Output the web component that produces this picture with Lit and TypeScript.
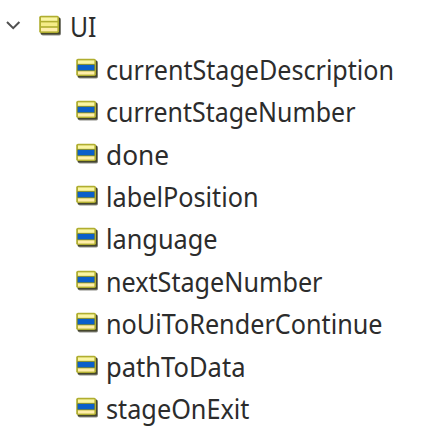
import { LitElement, html, css, svg } from "lit";
import { customElement, property } from "lit/decorators.js";

@customElement("node-icon")
class NodeIcon extends LitElement {
  @property({ type: Boolean }) field = false;
  static styles = css`
    :host { display: block; width: 24px; height: 22px; flex: none; }
    svg { display: block; }
  `;
  render() {
    return html`<svg width="24" height="22" viewBox="0 0 24 22">
      <rect x="2.2" y="3" width="19.8" height="17.4" rx="1.6" fill="#8d8d88" />
      <rect x="1.6" y="2.4" width="19.6" height="17.2" rx="1" fill="#45462c" />
      <rect x="0.2" y="0.8" width="19.8" height="17.2" rx="1.8" fill="#b0ae30" />
      <rect x="2" y="2.4" width="16.4" height="3.4" fill="#faf6a4" />
      ${this.field
        ? svg`<rect x="1.2" y="6.4" width="17.6" height="6.4" fill="#667c42" />
            <rect x="1.8" y="7" width="16.4" height="5.2" fill="#0b5fca" />
            <rect x="2" y="13.4" width="16.4" height="3.2" fill="#ffeeaa" />`
        : svg`<rect x="2" y="7.4" width="16.4" height="3.8" fill="#f5ec88" />
            <rect x="2" y="12.8" width="16.4" height="3.6" fill="#ffeeaa" />`}
    </svg>`;
  }
}

@customElement("node-label")
class NodeLabel extends LitElement {
  @property() text = "";
  @property({ type: Number }) span = 0;
  static styles = css`
    :host { display: block; flex: none; }
    svg { display: block; overflow: visible; }
    text { font: 27px "Noto Sans", "Open Sans", sans-serif; fill: #2c2c2c; }
  `;
  render() {
    return html`<svg width=${this.span} height="40">
      <text x="0" y="31" textLength=${this.span} lengthAdjust="spacingAndGlyphs">${this.text}</text>
    </svg>`;
  }
}

const fields: [string, number][] = [
  ["currentStageDescription", 288],
  ["currentStageNumber", 249.5],
  ["done", 63],
  ["labelPosition", 152.5],
  ["language", 111.5],
  ["nextStageNumber", 216.5],
  ["noUiToRenderContinue", 276.5],
  ["pathToData", 139.5],
  ["stageOnExit", 143.5],
];

@customElement("app-root")
class AppRoot extends LitElement {
  static styles = css`
    :host { display: block; height: 438px; overflow: hidden; background: #fff; }
    .tree { padding-top: 5px; }
    .row { display: flex; align-items: center; height: 42.45px; }
    .root { padding-left: 5px; }
    .chevron { width: 16px; height: 12px; margin-right: 18px; flex: none; }
    .root node-label { margin-left: 7px; }
    .child { padding-left: 76px; }
    .child node-label { margin-left: 6.4px; }
  `;
  render() {
    return html`<div class="tree">
      <div class="row root">
        <svg class="chevron" viewBox="0 0 16 12">
          <path d="M2 2 L8.2 8.2 L14.4 2" fill="none" stroke="#505050" stroke-width="2" />
        </svg>
        <node-icon></node-icon>
        <node-label text="UI" .span=${26.5}></node-label>
      </div>
      ${fields.map(
        ([name, span]) => html`<div class="row child">
          <node-icon field></node-icon>
          <node-label .text=${name} .span=${span}></node-label>
        </div>`
      )}
    </div>`;
  }
}
